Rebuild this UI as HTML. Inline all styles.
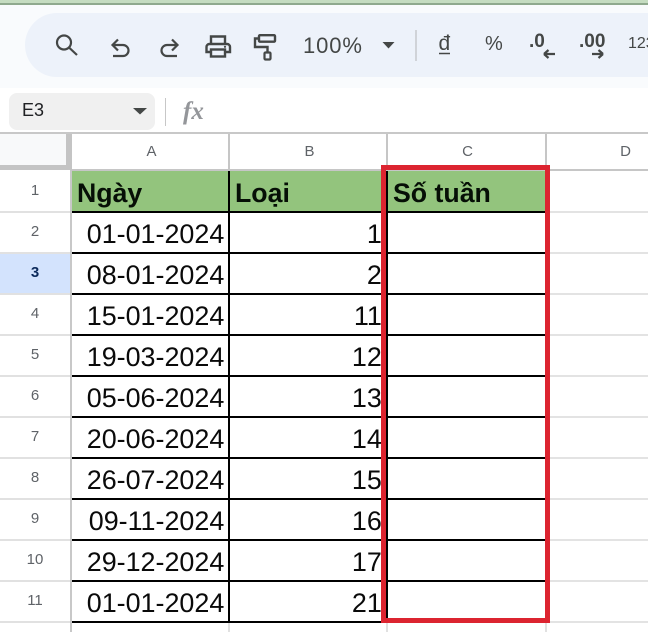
<!DOCTYPE html>
<html><head><meta charset="utf-8">
<style>
html,body{margin:0;padding:0;background:#fff}
#p{position:relative;width:648px;height:632px;overflow:hidden;background:#fff;font-family:"Liberation Sans",sans-serif}
#p div{position:absolute}
.rh{left:0;width:70px;text-align:center;font-size:15px;color:#5f6368;line-height:40px;height:40px}
.ch{top:135px;height:34px;line-height:34px;text-align:center;font-size:15px;color:#5f6368}
.hl{left:0;width:70px;height:2px;background:#e1e1e1}
.gl{left:547px;width:101px;height:2px;background:#e3e3e3}
.bl{left:72px;width:474px;height:2px;background:#000}
.a{left:72px;width:152.3px;text-align:right;font-size:26.9px;line-height:40px;height:40px;color:#0a0a0a;white-space:nowrap}
.b{left:230px;width:151.8px;text-align:right;font-size:26.9px;line-height:40px;height:40px;color:#0a0a0a;white-space:nowrap}
.h{top:173px;font-size:26.7px;font-weight:bold;line-height:40px;height:40px;color:#060f06;white-space:nowrap}
.t{color:#444746;white-space:nowrap}
svg{position:absolute;overflow:visible}
</style></head><body><div id="p">

<div style="left:0;top:0;width:648px;height:3px;background:#c5dcc1"></div>
<div style="left:0;top:3px;width:648px;height:2px;background:#8fa98e"></div>
<div style="left:0;top:5px;width:648px;height:83px;background:#f9fbfd"></div>
<div style="left:25px;top:13px;width:700px;height:64px;border-radius:32px;background:#edf2fa"></div>

<svg style="left:0;top:0" width="648" height="90" fill="none" stroke="#444746" stroke-width="2.2">
<circle cx="64" cy="42.500" r="7"/><path d="M69 47.500l8 7.500"/>
<path d="M118 39.500l-5.500 5.500 5.500 5.500M113 45h10a5.500 5.500 0 0 1 0 11h-10"/>
<path d="M172 39.500l5.500 5.500-5.500 5.500M177 45h-10a5.500 5.500 0 0 0 0 11h10"/>
<path d="M211 44v-7.500h14v7.500M210.500 52h-4v-5a3 3 0 0 1 3-3h17.500a3 3 0 0 1 3 3v5h-4.500" stroke-width="2.400"/>
<rect x="211" y="49.500" width="14" height="7" stroke-width="2.400"/>
<circle cx="225" cy="46.800" r="1.100" fill="#444746" stroke="none"/>
<rect x="259" y="35.200" width="16" height="6.500" rx="1" stroke-width="2.400"/>
<path d="M259 38.500h-4v8.500h12.500v5" stroke-width="2.400"/>
<rect x="264.500" y="52.500" width="6" height="7" rx="1" stroke-width="2.200"/>
<path d="M416 30v31" stroke="#c7c9cc" stroke-width="1.500"/>
<path d="M439 53.500h11" stroke-width="1.500"/>
<path d="M544 54h11M544 54l4.500-4M544 54l4.500 4" stroke-width="2.200"/>
<path d="M592 54h11M603 54l-4.500-4M603 54l-4.500 4" stroke-width="2.200"/>
<path d="M382.500 42h12l-6 6.500z" fill="#444746" stroke="none"/>
</svg>

<div class="t" style="left:303px;top:32px;font-size:22px;line-height:28px;letter-spacing:.9px">100%</div>
<div class="t" style="left:438.500px;top:31px;font-size:21px;line-height:26px;">đ</div>
<div class="t" style="left:485px;top:32px;font-size:20px;line-height:24px">%</div>
<div class="t" style="left:529px;top:31px;font-size:19px;line-height:22px;font-weight:bold">.0</div>
<div class="t" style="left:579px;top:31px;font-size:19px;line-height:22px;font-weight:bold">.00</div>
<div class="t" style="left:628px;top:33px;font-size:16px;line-height:22px">123</div>

<div style="left:9px;top:93px;width:146px;height:37px;border-radius:8px;background:#f0f0f0"></div>
<div style="left:22px;top:98px;font-size:18px;line-height:24px;color:#202124">E3</div>
<svg style="left:0;top:0" width="648" height="130"><path d="M133 108h14l-7 6.500z" fill="#444746"/></svg>
<div style="left:165px;top:98px;width:1px;height:28px;background:#c7c7c7"></div>
<div style="left:183px;top:99px;font-family:'Liberation Serif',serif;font-style:italic;font-weight:bold;font-size:25px;line-height:26px;color:#94969a">fx</div>

<!-- headers -->
<div style="left:0;top:132px;width:648px;height:2px;background:#c8c8c8"></div>
<div style="left:0;top:134px;width:66px;height:31px;background:#f8f9fa"></div>
<div style="left:66px;top:134px;width:6px;height:36px;background:#c4c4c4"></div>
<div style="left:0;top:165px;width:72px;height:5px;background:#c4c4c4"></div>
<div style="left:72px;top:169px;width:576px;height:2px;background:#c6c6c6"></div>
<div style="left:228px;top:134px;width:1.500px;height:36px;background:#c6c6c6"></div>
<div style="left:386px;top:134px;width:1.500px;height:36px;background:#c6c6c6"></div>
<div style="left:545px;top:134px;width:1.500px;height:36px;background:#c6c6c6"></div>
<div class="ch" style="left:73px;width:157px">A</div>
<div class="ch" style="left:231px;width:157px">B</div>
<div class="ch" style="left:389px;width:157px">C</div>
<div class="ch" style="left:547px;width:157px">D</div>

<!-- row header -->
<div style="left:0;top:254px;width:70px;height:40px;background:#d3e3fd"></div>
<div style="left:70px;top:170px;width:2px;height:462px;background:#c8c8c8"></div>
<div class="rh" style="top:171px">1</div>
<div class="rh" style="top:212px">2</div>
<div class="rh" style="top:253px;color:#0b2a5b;font-weight:bold">3</div>
<div class="rh" style="top:294px">4</div>
<div class="rh" style="top:335px">5</div>
<div class="rh" style="top:376px">6</div>
<div class="rh" style="top:417px">7</div>
<div class="rh" style="top:458px">8</div>
<div class="rh" style="top:499px">9</div>
<div class="rh" style="top:540px">10</div>
<div class="rh" style="top:581px">11</div>
<div class="hl" style="top:211px"></div><div class="hl" style="top:252px"></div><div class="hl" style="top:293px"></div><div class="hl" style="top:334px"></div><div class="hl" style="top:375px"></div><div class="hl" style="top:416px"></div><div class="hl" style="top:457px"></div><div class="hl" style="top:498px"></div><div class="hl" style="top:539px"></div><div class="hl" style="top:580px"></div><div class="hl" style="top:621px"></div>

<!-- right grid -->
<div class="gl" style="top:211px"></div><div class="gl" style="top:252px"></div><div class="gl" style="top:293px"></div><div class="gl" style="top:334px"></div><div class="gl" style="top:375px"></div><div class="gl" style="top:416px"></div><div class="gl" style="top:457px"></div><div class="gl" style="top:498px"></div><div class="gl" style="top:539px"></div><div class="gl" style="top:580px"></div><div class="gl" style="top:621px"></div>
<div style="left:228px;top:623px;width:1.500px;height:9px;background:#e1e1e1"></div>
<div style="left:386px;top:623px;width:1.500px;height:9px;background:#e1e1e1"></div>
<div style="left:545px;top:623px;width:1.500px;height:9px;background:#e1e1e1"></div>

<!-- table -->
<div style="left:72px;top:171px;width:474px;height:40px;background:#93c47d"></div>
<div class="bl" style="top:211px"></div><div class="bl" style="top:252px"></div><div class="bl" style="top:293px"></div><div class="bl" style="top:334px"></div><div class="bl" style="top:375px"></div><div class="bl" style="top:416px"></div><div class="bl" style="top:457px"></div><div class="bl" style="top:498px"></div><div class="bl" style="top:539px"></div><div class="bl" style="top:580px"></div><div class="bl" style="top:621px"></div>
<div style="left:228px;top:171px;width:2px;height:452px;background:#000"></div>
<div style="left:386px;top:171px;width:2px;height:452px;background:#000"></div>
<div style="left:544.500px;top:171px;width:2px;height:452px;background:#000"></div>

<div class="h" style="left:77px">Ngày</div>
<div class="h" style="left:235px">Loại</div>
<div class="h" style="left:393px">Số tuần</div>

<div class="a" style="top:214px">01-01-2024</div><div class="b" style="top:214px">1</div>
<div class="a" style="top:255px">08-01-2024</div><div class="b" style="top:255px">2</div>
<div class="a" style="top:296px">15-01-2024</div><div class="b" style="top:296px">11</div>
<div class="a" style="top:337px">19-03-2024</div><div class="b" style="top:337px">12</div>
<div class="a" style="top:378px">05-06-2024</div><div class="b" style="top:378px">13</div>
<div class="a" style="top:419px">20-06-2024</div><div class="b" style="top:419px">14</div>
<div class="a" style="top:460px">26-07-2024</div><div class="b" style="top:460px">15</div>
<div class="a" style="top:501px">09-11-2024</div><div class="b" style="top:501px">16</div>
<div class="a" style="top:542px">29-12-2024</div><div class="b" style="top:542px">17</div>
<div class="a" style="top:583px">01-01-2024</div><div class="b" style="top:583px">21</div>

<div style="left:381px;top:165px;width:159px;height:448px;border:5px solid #dc2430"></div>
</div></body></html>
